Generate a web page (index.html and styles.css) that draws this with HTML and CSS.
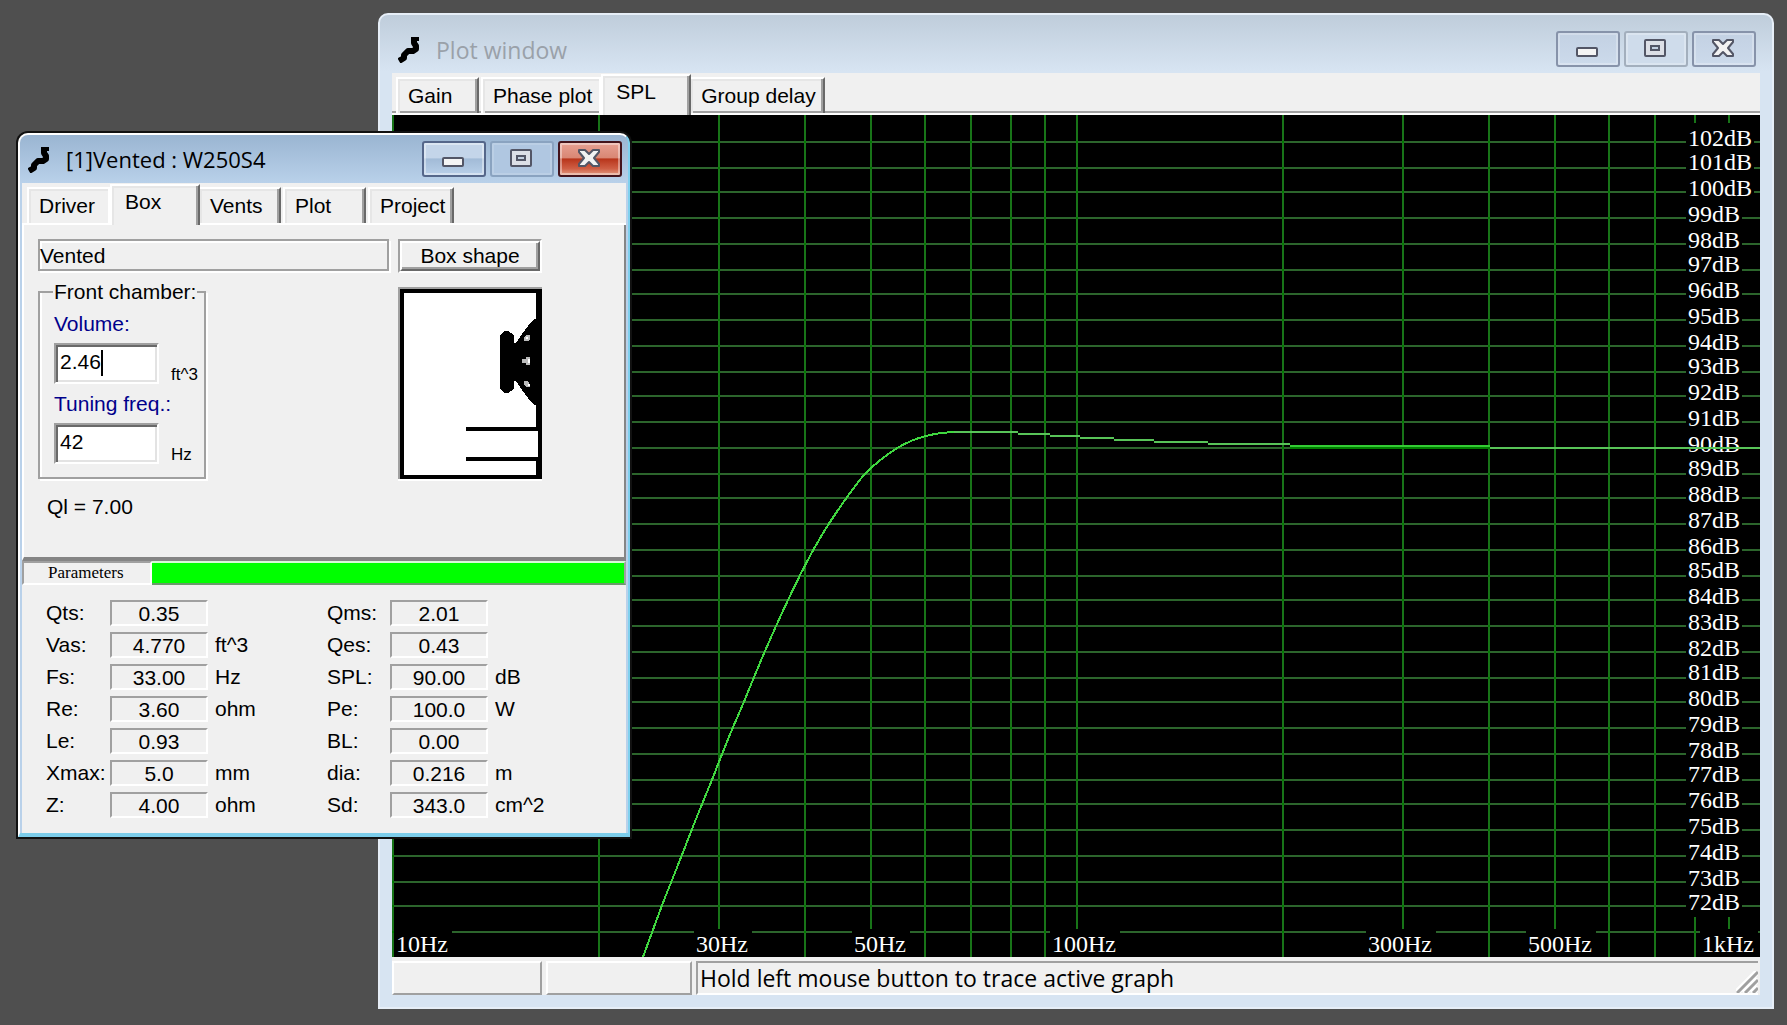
FILE: index.html
```html
<!DOCTYPE html>
<html lang="en">
<head>
<meta charset="utf-8">
<title>Plot window</title>
<link rel="stylesheet" href="styles.css">
</head>
<body>
<svg class="defs" aria-hidden="true">
  <symbol id="app-icon" viewBox="0 0 24 26">
    <path d="M16 2v4l2 3v3l-3 2h-5l-4 4v3l-5 3" fill="none" stroke="#000" stroke-width="6" stroke-linejoin="round"/>
    <path d="M13 0h8v4h-8z"/>
  </symbol>
  <symbol id="icon-min" viewBox="0 0 24 24">
    <rect x="1" y="11" width="20" height="8" rx="1" fill="#f4f4f4" stroke="#535666" stroke-width="2"/>
  </symbol>
  <symbol id="icon-max" viewBox="0 0 24 24">
    <rect x="1" y="3" width="20" height="16" rx="1" fill="#dcdfe6" stroke="#535666" stroke-width="2"/>
    <rect x="7" y="9" width="8" height="4" fill="#c3d0e0" stroke="#535666" stroke-width="2"/>
  </symbol>
  <symbol id="icon-close" viewBox="0 0 24 24">
    <path d="M1 3h6l4 4 4-4h6v2l-5 6 5 6v2h-6l-4-4-4 4H1v-2l5-6-5-6z" fill="#f2f2f2" stroke="#535666" stroke-width="2" stroke-linejoin="round"/>
  </symbol>
</svg>

<main class="desktop">
  <section class="window window-plot" aria-label="Plot window">
    <header class="titlebar">
      <svg class="app-icon"><use href="#app-icon"/></svg>
      <h1 class="title">Plot window</h1>
      <button class="caption" aria-label="Minimize"><svg><use href="#icon-min"/></svg></button>
      <button class="caption caption-off" aria-label="Maximize"><svg><use href="#icon-max"/></svg></button>
      <button class="caption" aria-label="Close"><svg><use href="#icon-close"/></svg></button>
    </header>
    <nav class="tabs tabs-plot" role="tablist">
      <button class="tab" role="tab">Gain</button>
      <button class="tab tab-before" role="tab">Phase plot</button>
      <button class="tab tab-selected" role="tab" aria-selected="true">SPL</button>
      <button class="tab" role="tab">Group delay</button>
    </nav>
    <div class="plot"><svg id="chart" role="img" aria-label="SPL against frequency"></svg></div>
    <footer class="status">
      <div class="status-cell status-cell-wide"></div>
      <div class="status-cell"></div>
      <div class="status-message">Hold left mouse button to trace active graph
        <svg class="grip" viewBox="0 0 22 22"><path d="M0 22 22 0M8 22 22 8M16 22l6-6" stroke="#fff" stroke-width="6"/><path d="M1 22 22 1M9 22 22 9M17 22l5-5" stroke="#a0a0a0" stroke-width="3"/></svg>
      </div>
    </footer>
  </section>

  <section class="window window-driver" aria-label="Driver">
    <header class="titlebar">
      <svg class="app-icon"><use href="#app-icon"/></svg>
      <h2 class="title">[1]Vented : W250S4</h2>
      <button class="caption" aria-label="Minimize"><svg><use href="#icon-min"/></svg></button>
      <button class="caption caption-off" aria-label="Maximize"><svg><use href="#icon-max"/></svg></button>
      <button class="caption caption-close" aria-label="Close"><svg><use href="#icon-close"/></svg></button>
    </header>
    <div class="client">
      <nav class="tabs" role="tablist">
        <button class="tab tab-before" role="tab">Driver</button>
        <button class="tab tab-selected" role="tab" aria-selected="true">Box</button>
        <button class="tab" role="tab">Vents</button>
        <button class="tab" role="tab">Plot</button>
        <button class="tab" role="tab">Project</button>
      </nav>
      <div class="page">
        <div class="page-left">
          <div class="box-type">Vented</div>
          <fieldset class="chamber">
            <legend>Front chamber:</legend>
            <label for="volume">Volume:</label>
            <div class="field"><input id="volume" type="text" value="2.46"><span class="caret"></span><span class="unit">ft^3</span></div>
            <label for="tuning">Tuning freq.:</label>
            <div class="field"><input id="tuning" type="text" value="42"><span class="unit">Hz</span></div>
          </fieldset>
          <p class="losses">Ql = 7.00</p>
        </div>
        <div class="page-right">
          <div class="button-well"><button class="push">Box shape</button></div>
          <svg class="box-picture" viewBox="0 0 144 194" shape-rendering="crispEdges" aria-label="Vented box">
            <path d="M0 0h144v194H0z" fill="#fff"/>
            <path d="M0 0h144v2H2v190H0z" fill="#a0a0a0"/>
            <path d="M2 2h142v190H2z"/>
            <path d="M6 6h132v134H68v4h72v26H68v4h70v14H6z" fill="#fff"/>
            <path d="M102 48l4-4h4l6 4v8h2l6-9 6-8 6-7h4v86h-4l-6-7-6-8-6-9h-2v8l-6 4h-4l-4-4z"/>
            <path d="M128 48h4v4l-2 2h-4v-4zM124 72h4v-2h4v8h-4v-2h-4zM126 94h4l2 4v2h-4l-2-2z" fill="#bbb"/>
            <path d="M128 50h2v2h-2zM130 72h2v4h-2zM130 97h2v2h-2z" fill="#fff"/>
          </svg>
        </div>
      </div>
      <div class="strip">
        <h3 class="strip-title">Parameters</h3>
        <div class="strip-color"></div>
      </div>
      <table class="params">
        <tr><th>Qts:</th><td class="value"><span>0.35</span></td><td class="unit-cell"></td><th>Qms:</th><td class="value"><span>2.01</span></td><td></td></tr>
        <tr><th>Vas:</th><td class="value"><span>4.770</span></td><td class="unit-cell">ft^3</td><th>Qes:</th><td class="value"><span>0.43</span></td><td></td></tr>
        <tr><th>Fs:</th><td class="value"><span>33.00</span></td><td class="unit-cell">Hz</td><th>SPL:</th><td class="value"><span>90.00</span></td><td>dB</td></tr>
        <tr><th>Re:</th><td class="value"><span>3.60</span></td><td class="unit-cell">ohm</td><th>Pe:</th><td class="value"><span>100.0</span></td><td>W</td></tr>
        <tr><th>Le:</th><td class="value"><span>0.93</span></td><td class="unit-cell"></td><th>BL:</th><td class="value"><span>0.00</span></td><td></td></tr>
        <tr><th>Xmax:</th><td class="value"><span>5.0</span></td><td class="unit-cell">mm</td><th>dia:</th><td class="value"><span>0.216</span></td><td>m</td></tr>
        <tr><th>Z:</th><td class="value"><span>4.00</span></td><td class="unit-cell">ohm</td><th>Sd:</th><td class="value"><span>343.0</span></td><td>cm^2</td></tr>
      </table>
    </div>
  </section>
</main>
<script src="chart.js"></script>
</body>
</html>
```
FILE: styles.css
```css
* { box-sizing: border-box; }

html, body { height: 100%; }

body {
  margin: 0;
  background: #4f4f4f;
  color: #000;
  font: 21px/26px "Liberation Sans", Arial, sans-serif;
}

button, input {
  font: inherit;
  color: inherit;
  margin: 0;
  padding: 0;
  border: 0;
  border-radius: 0;
}

.defs { position: absolute; width: 0; height: 0; }

.desktop {
  position: relative;
  height: 100%;
  min-height: 860px;
  overflow: hidden;
}

/* windows */
.window {
  position: absolute;
  display: flex;
  flex-direction: column;
}

.window-plot {
  left: 378px;
  top: 13px;
  right: 13px;
  bottom: 16px;
  padding: 0 12px 12px;
  border: 2px solid #e6eef7;
  border-radius: 10px 10px 0 0;
  background: linear-gradient(#bfcddb, #d7e4f2 56px);
}

.window-driver {
  left: 18px;
  top: 133px;
  width: 612px;
  padding: 0 2px;
  border: 2px solid #fff;
  border-right-color: #7fd0ee;
  border-bottom: 4px solid #7ccdea;
  border-radius: 10px 10px 0 0;
  background: linear-gradient(#9ab5d2, #b9d1ea 48px);
  box-shadow: 0 0 0 2px #111;
}

.titlebar {
  display: flex;
  align-items: flex-start;
  gap: 4px;
  flex: none;
}

.window-plot .titlebar { height: 58px; padding: 16px 4px 0 4px; }
.window-driver .titlebar { height: 48px; padding: 6px 4px 0 4px; }

.app-icon { width: 24px; height: 26px; margin: 6px 10px 0 2px; }

.title {
  flex: 1;
  margin: 0;
  font: 400 22px/36px "Open Sans", "Noto Sans", sans-serif;
  white-space: nowrap;
}

.window-plot .title { color: #9aa1a9; font-size: 23px; line-height: 38px; }

.caption {
  display: flex;
  align-items: center;
  justify-content: center;
  width: 64px;
  height: 36px;
  border: 2px solid #8793aa;
  border-radius: 3px;
  background: linear-gradient(#c3d1e3, #ccdaeb);
  box-shadow: inset 0 0 0 2px rgba(255, 255, 255, 0.25);
}

.caption svg { width: 24px; height: 24px; }
.window-plot .caption-off { border-color: #a3afbd; background: #cfdceb; }

.window-driver .caption {
  border-color: #55678a;
  background: linear-gradient(#c4d5e9 46%, #a2bbd7 50%, #b9d0e9);
  box-shadow: inset 0 0 0 2px rgba(255, 255, 255, 0.4);
}

.window-driver .caption-off {
  border-color: #8aa3c0;
  background: #b0c7e1;
  box-shadow: inset 0 0 0 2px rgba(255, 255, 255, 0.15);
}

.window-driver .caption-close {
  border-color: #43141c;
  background: linear-gradient(#e6a193, #d98774 46%, #b8351b 50%, #cf5f45 80%, #e09a80);
}

/* tabs */
.tabs {
  display: flex;
  align-items: flex-end;
  flex: none;
  height: 42px;
  padding-left: 5px;
  border-bottom: 2px solid #fff;
  background: #f0f0f0;
}

.tabs-plot { padding-left: 4px; box-shadow: inset 0 -2px #a0a0a0; }

.tab {
  height: 36px;
  min-width: 83px;
  margin-right: 2px;
  padding: 0 7px 0 10px;
  border: 2px solid #fff;
  border-width: 2px 2px 0;
  border-right-color: #696969;
  background: none;
  box-shadow: inset -2px 0 #a0a0a0, inset 2px 2px #e6e6e6;
  text-align: left;
  white-space: nowrap;
}

.tab-before {
  margin-right: 0;
  border-right-color: #fff;
  box-shadow: inset 2px 2px #e6e6e6;
}

.tab-selected {
  position: relative;
  height: 41px;
  min-width: 90px;
  margin: 0 -2px -2px 0;
  padding: 0 12px 8px 13px;
  background: #f0f0f0;
}

/* plot area */
.plot {
  flex: 1;
  min-height: 0;
  background: #000;
  overflow: hidden;
}

.plot svg { display: block; width: 100%; height: 100%; }
.plot text { font: 24px "Liberation Serif", "Times New Roman", serif; fill: #fff; }
.mask { fill: #000; }
.grid-h { fill: #2c652c; }
.grid-v { fill: #187418; }
.cross { fill: #007c00; }
.curve { fill: none; stroke: #40d840; stroke-width: 2px; }
.curve-flat { fill: none; stroke: #58c458; stroke-width: 2px; }
.curve-bright { fill: #34cc34; }

.status {
  display: flex;
  gap: 4px;
  flex: none;
  height: 38px;
  padding: 4px 2px 0 0;
  background: #f0f0f0;
}

.status-cell {
  width: 146px;
  border: 2px solid #fff;
  border-right-color: #a0a0a0;
  border-bottom-color: #a0a0a0;
}

.status-cell-wide { width: 150px; }

.status-message {
  display: flex;
  justify-content: space-between;
  align-items: flex-end;
  flex: 1;
  padding-left: 2px;
  border: 2px solid #a0a0a0;
  border-right: 0;
  border-bottom-color: #fff;
  font: 23px/30px "Open Sans", "Noto Sans", sans-serif;
}

.grip { width: 22px; height: 22px; }

/* driver window */
.client { background: #f0f0f0; }

.page {
  display: flex;
  gap: 9px;
  height: 336px;
  padding: 14px 0 0 14px;
  border: 2px solid #fff;
  border-top: 0;
  border-right-color: #858585;
  border-bottom: 4px solid #858585;
}

.page-left { width: 351px; }

.box-type {
  height: 32px;
  border: 2px solid #a0a0a0;
  box-shadow: 2px 2px #fff, inset 2px 2px #fff;
  line-height: 30px;
}

.chamber {
  width: 168px;
  height: 200px;
  margin: 8px 0 0;
  padding: 0 0 0 14px;
  border: 2px solid #a0a0a0;
  box-shadow: 2px 2px #fff, inset 2px 0 #fff;
}

.chamber legend { padding: 0 1px; margin-left: -1px; }

.chamber label {
  display: block;
  height: 32px;
  color: #00008b;
  line-height: 38px;
}

.field {
  position: relative;
  display: flex;
  align-items: flex-end;
  gap: 12px;
  height: 48px;
  padding-bottom: 1px;
}

.field input {
  width: 105px;
  height: 41px;
  padding: 0 4px 4px;
  border: 2px solid #a0a0a0;
  border-right-color: #fff;
  border-bottom-color: #fff;
  background: #fff;
  box-shadow: inset 2px 2px #696969, inset -2px -2px #e3e3e3;
}

.caret {
  position: absolute;
  left: 47px;
  top: 13px;
  width: 2px;
  height: 26px;
  background: #000;
}

.unit { font-size: 17px; line-height: 18px; }

.losses { margin: 15px 0 0 9px; }

.page-right { display: flex; flex-direction: column; gap: 14px; width: 144px; }

.button-well {
  height: 34px;
  border: 2px solid #a0a0a0;
  border-right-color: #fff;
  border-bottom-color: #fff;
}

.push {
  display: block;
  width: 100%;
  height: 30px;
  border: 2px solid #fff;
  border-right-color: #696969;
  border-bottom-color: #696969;
  background: #f0f0f0;
  box-shadow: inset -2px -2px #a0a0a0;
}

.box-picture { display: block; width: 144px; height: 194px; }

.strip { display: flex; height: 24px; }

.strip-title {
  width: 130px;
  margin: 0;
  padding-left: 24px;
  border: 2px solid #a0a0a0;
  border-right-color: #fff;
  border-bottom-color: #fff;
  font: 400 17px/20px "Liberation Serif", "Times New Roman", serif;
}

.strip-color {
  flex: 1;
  border-top: 2px solid #d8f8d8;
  border-right: 2px solid #a0a0a0;
  border-bottom: 2px solid #6a9a6a;
  background: #0f0;
}

.params {
  width: 100%;
  margin: 12px 0;
  border-collapse: separate;
  border-spacing: 0;
  table-layout: fixed;
}

.params th, .params td {
  height: 32px;
  padding: 0 0 0 7px;
  font-weight: 400;
  line-height: 26px;
  text-align: left;
  white-space: nowrap;
}

.params th { width: 63px; padding: 0; }
.params th:first-child { width: 88px; padding-left: 24px; }
.params .unit-cell { width: 119px; }
.params .value { width: 98px; padding: 0; }

.value span {
  display: block;
  height: 26px;
  border: 2px solid #a0a0a0;
  border-right-color: #fff;
  border-bottom-color: #fff;
  line-height: 24px;
  text-align: center;
}
```
FILE: chart.js
```js
const NS = 'http://www.w3.org/2000/svg';
const chart = document.getElementById('chart');

// Frequency labels, each with the distance from its grid line to its left edge.
const freqLabels = [
  [10, '10Hz', 2], [30, '30Hz', -24], [50, '50Hz', -18], [100, '100Hz', -26],
  [300, '300Hz', -36], [500, '500Hz', -28], [1000, '1kHz', -60]
];

// Response samples on a 1368 x 842 plot.
const rise = [
  [251, 842], [261, 815], [270, 790], [280, 765], [290, 740], [300, 714], [310, 689],
  [320, 665], [330, 639], [341, 612], [352, 587], [362, 562], [373, 536], [384, 511],
  [396, 485], [408, 460], [421, 435], [437, 408], [455, 382], [472, 359], [488, 345],
  [506, 332], [521, 325], [533, 321], [548, 318], [562, 317]
];
const tail = [
  [562, 317, 626], [626, 319, 658], [658, 321, 688], [688, 323, 722], [722, 325, 762],
  [762, 327, 816], [816, 329, 898], [1098, 333, 1368]
];

function add(name, attrs, text) {
  const el = document.createElementNS(NS, name);
  for (const key in attrs) el.setAttribute(key, attrs[key]);
  if (text) el.textContent = text;
  chart.appendChild(el);
}

function rect(cls, x, y, width, height) {
  add('rect', { class: cls, x, y, width, height });
}

const even = v => 2 * Math.round(v / 2);

// Rounds the corners of a sampled line with quadratic segments.
function smooth(points) {
  let d = `M${points[0]}`;
  for (let i = 1; i < points.length - 1; i++) {
    const [x, y] = points[i];
    const [nx, ny] = points[i + 1];
    d += `Q${x} ${y} ${(x + nx) / 2} ${(y + ny) / 2}`;
  }
  return d + `L${points[points.length - 1]}`;
}

function draw() {
  const W = chart.clientWidth;
  const H = chart.clientHeight;
  const fx = f => even(W / 2 * Math.log10(f / 10));
  const dy = db => (103 - db) * H / 33;
  chart.replaceChildren();
  chart.setAttribute('viewBox', `0 0 ${W} ${H}`);

  const xs = [];
  for (const decade of [10, 100]) for (let k = 1; k < 10; k++) xs.push(fx(k * decade));
  const ys = [];
  for (let db = 102; db > 70; db--) ys.push(even(dy(db)));

  ys.forEach(y => rect('grid-h', 0, y, W, 2));
  xs.forEach(x => rect('grid-v', x, 0, 2, H));
  ys.forEach(y => xs.forEach(x => rect('cross', x, y, 2, 2)));

  rect('mask', W - 74, 8, 56, H - 48);
  for (let db = 102; db > 71; db--) {
    const base = even(dy(db) + 5.6) - 1;
    if (db > 99) rect('mask', W - 74, base - 20, 68, 24);
    add('text', { x: W - 72, y: base }, db + 'dB');
  }
  for (const [f, text, shift] of freqLabels) {
    const x = fx(f) + shift;
    rect('mask', x, H - 28, text.length === 5 ? 70 : 58, 28);
    add('text', { x: x + 2, y: H - 5 }, text);
  }

  const sx = W / 1368;
  const sy = H / 842;
  const d = smooth(rise.map(([x, y]) => [x * sx, y * sy]));
  add('path', { class: 'curve', d, 'shape-rendering': 'crispEdges' });
  for (const [x1, y, x2] of tail) {
    add('path', { class: 'curve-flat', d: `M${x1 * sx} ${Math.round(y * sy)}H${x2 * sx}` });
  }
  rect('curve-bright', 898 * sx, Math.round(330 * sy), 200 * sx, 2);
  rect('cross', 898 * sx, Math.round(332 * sy), 200 * sx, 2);
}

new ResizeObserver(draw).observe(chart);
draw();
```
